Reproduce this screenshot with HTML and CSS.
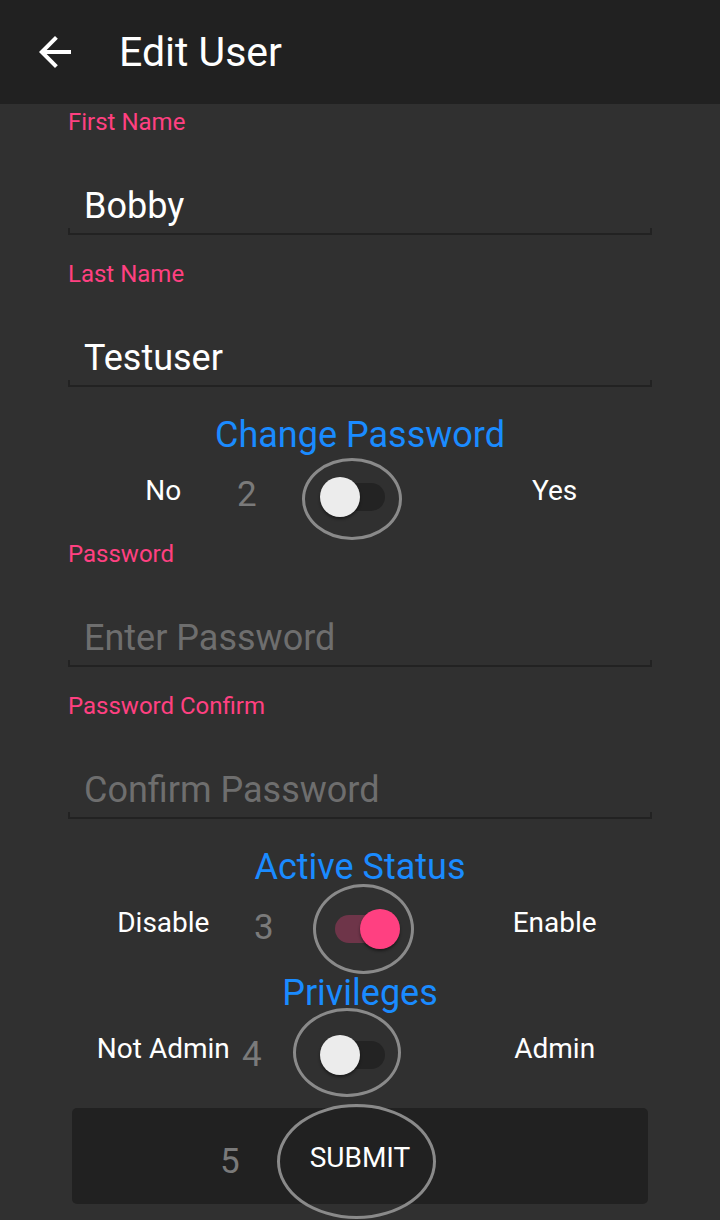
FILE: index.html
```html
<!DOCTYPE html>
<html lang="en">
<head>
<meta charset="utf-8">
<title>Edit User</title>
<link rel="stylesheet" href="styles.css">
</head>
<body>
<header class="appbar">
  <svg class="back" viewBox="0 0 24 24" width="48" height="48" aria-hidden="true"><path d="M20 11H7.83l5.59-5.59L12 4l-8 8 8 8 1.41-1.41L7.83 13H20v-2z" fill="#ffffff"/></svg>
  <h1 class="title">Edit User</h1>
</header>
<main class="form">
  <div class="field">
    <div class="field-label">First Name</div>
    <div class="input">Bobby</div>
    <div class="underline"></div>
  </div>
  <div class="field">
    <div class="field-label">Last Name</div>
    <div class="input">Testuser</div>
    <div class="underline"></div>
  </div>
  <h2 class="section-title">Change Password</h2>
  <div class="toggle-row">
    <span class="opt opt-left">No</span>
    <div class="switch-cell"><span class="switch"><span class="track"></span><span class="thumb"></span></span></div>
    <span class="opt">Yes</span>
    <span class="anno-num num-2">2</span>
    <span class="anno-ring ring-2"></span>
  </div>
  <div class="field">
    <div class="field-label">Password</div>
    <div class="input placeholder">Enter Password</div>
    <div class="underline"></div>
  </div>
  <div class="field">
    <div class="field-label">Password Confirm</div>
    <div class="input placeholder">Confirm Password</div>
    <div class="underline"></div>
  </div>
  <h2 class="section-title">Active Status</h2>
  <div class="toggle-row">
    <span class="opt opt-left">Disable</span>
    <div class="switch-cell"><span class="switch on"><span class="track"></span><span class="thumb"></span></span></div>
    <span class="opt">Enable</span>
    <span class="anno-num num-3">3</span>
    <span class="anno-ring ring-3"></span>
  </div>
  <h2 class="section-title">Privileges</h2>
  <div class="toggle-row">
    <span class="opt opt-left">Not Admin</span>
    <div class="switch-cell"><span class="switch"><span class="track"></span><span class="thumb"></span></span></div>
    <span class="opt">Admin</span>
    <span class="anno-num num-4">4</span>
    <span class="anno-ring ring-4"></span>
  </div>
  <div class="submit-wrap">
    <button class="submit" type="button">SUBMIT</button>
    <span class="anno-num num-5">5</span>
    <span class="anno-ring ring-5"></span>
  </div>
</main>
</body>
</html>
```
FILE: styles.css
```css
* { box-sizing: border-box; }
html, body {
  margin: 0;
  padding: 0;
  background: #303030;
  font-family: Roboto, "Noto Sans", sans-serif;
  color: #ffffff;
  overflow: hidden;
}
body { width: 720px; height: 1220px; }

.appbar {
  height: 104px;
  background: #212121;
  display: flex;
  align-items: center;
  padding-left: 31px;
}
.back { display: block; flex: none; }
.title {
  margin: 0 0 0 40px;
  font-size: 41px;
  line-height: 48px;
  font-weight: 400;
  color: #ffffff;
}

.form {
  padding: 4px 68px 0;
}

.field { margin-bottom: 25px; }
.field-label {
  font-size: 24px;
  line-height: 29px;
  color: #ff4081;
}
.input {
  padding: 48px 0 0 16px;
  font-size: 36px;
  line-height: 42px;
  color: #ffffff;
}
.input.placeholder { color: #6e6e6e; }
.underline {
  margin-top: 1px;
  height: 7px;
  border: 2px solid #222222;
  border-top: 0;
}

.section-title {
  margin: 0;
  font-size: 36px;
  line-height: 42px;
  font-weight: 400;
  color: #1a8bff;
  text-align: center;
}
.field + .section-title { margin-top: 27px; }

.toggle-row {
  position: relative;
  height: 82px;
  margin-bottom: 2px;
  display: grid;
  grid-template-columns: 1fr 1fr 1fr;
  align-items: center;
}
.opt {
  font-size: 28px;
  line-height: 32px;
  text-align: center;
  margin-bottom: 13px;
  white-space: nowrap;
}
.opt-left { padding-right: 4px; }
.switch-cell { display: flex; justify-content: center; }
.switch {
  position: relative;
  display: block;
  width: 80px;
  height: 40px;
}
.track {
  position: absolute;
  left: 15px;
  top: 6px;
  width: 50px;
  height: 28px;
  border-radius: 14px;
  background: #232323;
}
.thumb {
  position: absolute;
  left: 0;
  top: 0;
  width: 40px;
  height: 40px;
  border-radius: 50%;
  background: #ececec;
  box-shadow: 0 2px 3px rgba(0, 0, 0, 0.45);
}
.switch.on .track { background: #6e3549; }
.switch.on .thumb { left: 40px; background: #ff4081; }

.anno-num {
  position: absolute;
  font-size: 35px;
  line-height: 40px;
  color: #7a7a7a;
}
.num-2 { left: 169px; top: 19px; }
.num-3 { left: 186px; top: 20px; }
.num-4 { left: 174px; top: 21px; }
.num-5 { left: 148px; top: 34px; }

.anno-ring {
  position: absolute;
  border: 3px solid #8a8a8a;
  border-radius: 50%;
  pointer-events: none;
}
.ring-2 { left: 234px; top: 2px; width: 100px; height: 82px; }
.ring-3 { left: 245px; top: -4px; width: 101px; height: 90px; }
.ring-4 { left: 225px; top: -6px; width: 108px; height: 89px; }
.ring-5 { left: 205px; top: -4px; width: 159px; height: 115px; }

.submit-wrap {
  position: relative;
  margin: 12px 0 0 4px;
  width: 576px;
  height: 96px;
}
.submit {
  display: block;
  width: 100%;
  height: 100%;
  border: 0;
  border-radius: 5px;
  background: #212121;
  color: #ffffff;
  font-family: Roboto, "Noto Sans", sans-serif;
  font-size: 28px;
  line-height: 32px;
  font-weight: 400;
  padding: 4px 0 0;
}
```
